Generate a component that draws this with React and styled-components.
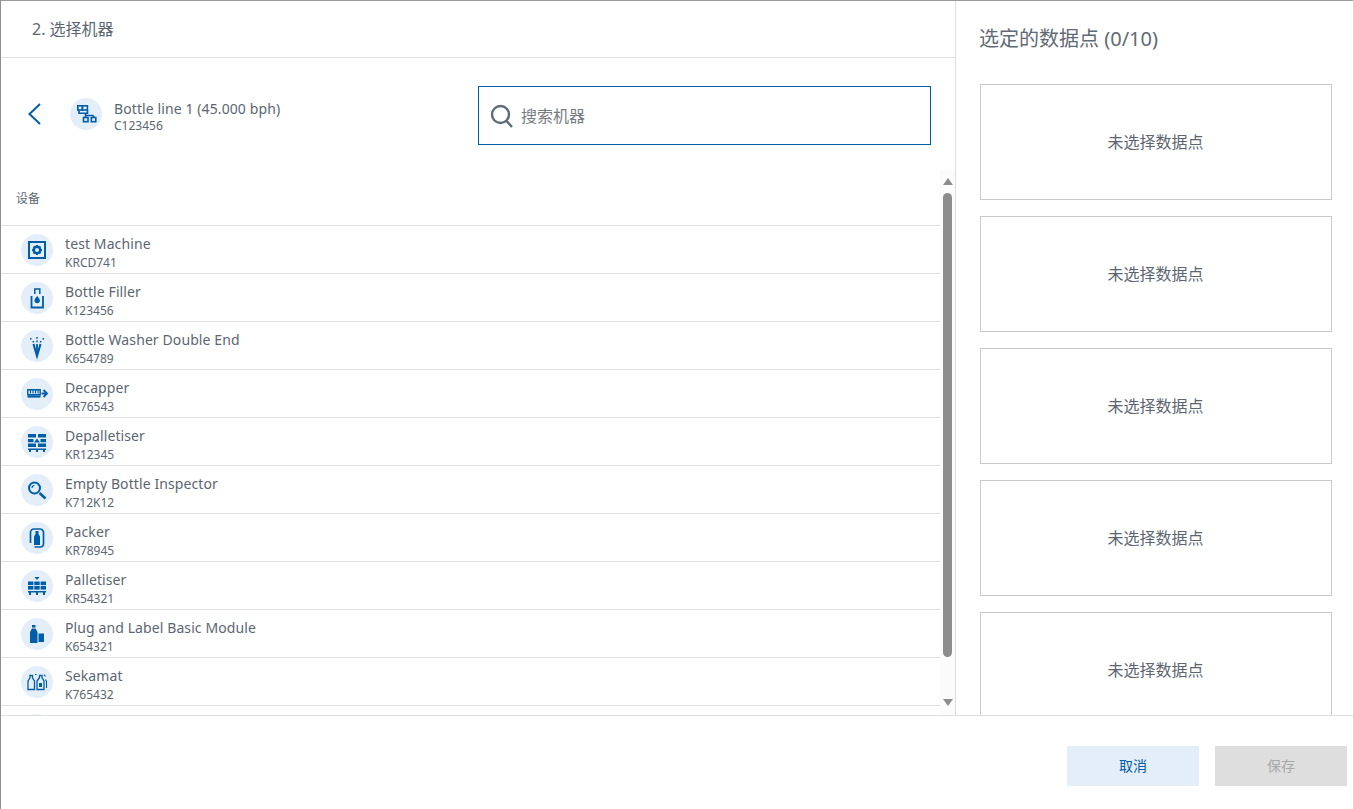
import * as React from "react";
import styled, { createGlobalStyle } from "styled-components";

const BLUE = "#005da8";
const FONT = `"Noto Sans", "Noto Sans CJK SC", sans-serif`;

const GlobalStyle = createGlobalStyle`
  html, body {
    margin: 0;
    padding: 0;
    background: #fff;
    overflow: hidden;
  }
  * {
    box-sizing: border-box;
  }
`;

const Page = styled.div`
  display: flex;
  flex-direction: column;
  height: 809px;
  border-top: 1px solid #9c9c9c;
  border-left: 1px solid #8f8f8f;
  font-family: ${FONT};
  color: #5c6671;
`;

const Main = styled.div`
  display: flex;
  height: 714px;
  overflow: hidden;
`;

const LeftPanel = styled.div`
  display: flex;
  flex-direction: column;
  width: 955px;
  border-right: 1px solid #dedede;
`;

const StepHeader = styled.div`
  display: flex;
  align-items: center;
  height: 57px;
  padding: 0 0 3px 31px;
  border-bottom: 1px solid #dedede;
  font-size: 16px;
`;

const Toolbar = styled.div`
  display: flex;
  align-items: flex-start;
  height: 112px;
`;

const BackButton = styled.div`
  display: flex;
  width: 69px;
  height: 24px;
  margin-top: 44px;
  padding-left: 26px;
`;

const LineInfo = styled.div`
  display: flex;
  align-items: center;
  gap: 12px;
  width: 408px;
  margin-top: 36px;
`;

const TextBlock = styled.div`
  display: flex;
  flex-direction: column;
  padding-top: 6px;
`;

const Name = styled.div`
  font-size: 14px;
  line-height: 18px;
  letter-spacing: 0.1px;
  white-space: nowrap;
`;

const Code = styled.div`
  font-size: 12px;
  line-height: 16px;
  white-space: nowrap;
`;

const SearchBox = styled.div`
  display: flex;
  align-items: center;
  gap: 7px;
  width: 453px;
  height: 59px;
  margin-top: 28px;
  padding-left: 11px;
  border: 1px solid ${BLUE};
`;

const Placeholder = styled.span`
  margin-bottom: 2px;
  font-size: 16px;
  color: #777c82;
`;

const ListArea = styled.div`
  display: flex;
  flex: 1;
  min-height: 0;
`;

const ListColumn = styled.div`
  flex: 1;
  min-width: 0;
  overflow: hidden;
`;

const ListTitle = styled.div`
  display: flex;
  align-items: center;
  height: 56px;
  padding: 1px 0 0 15px;
  border-bottom: 1px solid #dedede;
  font-size: 12px;
`;

const Row = styled.div`
  display: flex;
  align-items: center;
  gap: 12px;
  height: 48px;
  padding: 0 0 0 20px;
  border-bottom: 1px solid #dedede;
`;

const IconCircle = styled.div`
  flex: none;
  width: 32px;
  height: 32px;
  border-radius: 50%;
  background: #e3eef8;
  color: ${BLUE};
`;

const RowText = styled.div`
  display: flex;
  flex-direction: column;
  padding-top: 7px;
`;

const RowCode = styled(Code)`
  margin-top: 2px;
`;

const ScrollBar = styled.div`
  display: flex;
  flex: none;
  flex-direction: column;
  align-items: center;
  width: 15px;
  background: #fbfbfb;
`;

const ScrollThumb = styled.div`
  flex: none;
  width: 9px;
  height: 464px;
  border-radius: 5px;
  background: #8c8c8c;
`;

const ArrowUp = styled.div`
  flex: none;
  width: 0;
  height: 0;
  margin: 8px 0 8px;
  border-left: 5px solid transparent;
  border-right: 5px solid transparent;
  border-bottom: 7px solid #8c8c8c;
`;

const ArrowDown = styled(ArrowUp)`
  margin: 42px 0 0;
  border-bottom: 0;
  border-top: 7px solid #8c8c8c;
`;

const RightPanel = styled.div`
  display: flex;
  flex-direction: column;
  flex: 1;
  padding-left: 24px;
  overflow: hidden;
`;

const PanelTitle = styled.div`
  flex: none;
  height: 83px;
  margin-left: -1px;
  padding-top: 24px;
  font-size: 20px;
  line-height: 28px;
  color: #5f6a75;
`;

const SlotList = styled.div`
  display: flex;
  flex-direction: column;
  flex: none;
  gap: 16px;
  width: 352px;
`;

const Slot = styled.div`
  display: flex;
  flex: none;
  align-items: center;
  justify-content: center;
  height: 116px;
  padding: 0 1px 2px 0;
  border: 1px solid #c8c8c8;
  font-size: 16px;
`;

const Footer = styled.div`
  display: flex;
  justify-content: flex-end;
  gap: 16px;
  height: 94px;
  padding: 30px 6px 0 0;
  border-top: 1px solid #dedede;
`;

const Button = styled.button`
  width: 132px;
  height: 40px;
  padding: 0 0 2px;
  border: 0;
  font-family: ${FONT};
  font-size: 14px;
  color: ${props => (props.disabled ? "#a8a8a8" : BLUE)};
  background: ${props => (props.disabled ? "#dedede" : "#e3eef8")};
`;

const Svg = ({ children }) => (
  <svg width="32" height="32" viewBox="0 0 32 32" fill="none" stroke="currentColor" strokeWidth="1.5">
    {children}
  </svg>
);

const LineIcon = () => (
  <Svg>
    <rect x="7.8" y="7.8" width="4.6" height="4.2" strokeWidth="1.6" />
    <rect x="12.4" y="7.8" width="5" height="4.2" strokeWidth="1.6" />
    <path d="M9 12v3.2h8.500V12M15.500 15v2.500M15.500 17.500h8M15.500 17.500v2M23.500 17.500v2" strokeWidth="1.6" />
    <rect x="13.500" y="19.500" width="4.500" height="4.200" strokeWidth="1.600" />
    <rect x="21.300" y="19.500" width="4.500" height="4.200" strokeWidth="1.600" />
  </Svg>
);

const MachineIcon = () => (
  <Svg>
    <rect x="8" y="8" width="16" height="16" strokeWidth="2" />
    <circle cx="16" cy="16" r="3.2" strokeWidth="2.4" />
    <path d="M16 11v2M16 19v2M11 16h2M19 16h2M12.500 12.500l1.400 1.400M18.100 18.100l1.400 1.400M12.500 19.500l1.400-1.400M18.100 13.900l1.400-1.400" strokeWidth="2" />
  </Svg>
);

const FillerIcon = () => (
  <Svg>
    <path d="M10.500 14v11.500h11.500V14" strokeWidth="1.800" />
    <path d="M13.800 12V7h5v5" strokeWidth="1.500" />
    <path d="M16.200 14c-1.600 2-2.700 3.200-2.700 4.600a2.700 2.700 0 0 0 5.400 0c0-1.400-1.100-2.600-2.700-4.600z" fill="currentColor" stroke="none" />
  </Svg>
);

const WasherIcon = () => (
  <Svg>
    <path d="M12.500 14l3.500 12 3.500-12" strokeWidth="2.100" />
    <path d="M16 14v8" strokeWidth="1.800" />
    <path d="M16 7v1.800M16 10.500v1.800M9.500 8l.6 1.500M22.500 8l-.6 1.500M12 11l.6 1.500M20 11l-.6 1.500" strokeWidth="1.500" />
  </Svg>
);

const DecapperIcon = () => (
  <Svg>
    <path d="M6.800 11.800h12.400v5H6.800z" strokeWidth="1.400" />
    <path d="M9.500 12v3.500M12 12v3.500M14.500 12v3.500M17 12v3.500" strokeWidth="1.200" />
    <path d="M6.500 18.500h13" strokeWidth="2.200" />
    <path d="M20.500 15.500h5M22.500 12l3.500 3.500-3.500 3.500" strokeWidth="1.800" />
  </Svg>
);

const DepalletiserIcon = () => (
  <Svg>
    <g fill="currentColor" stroke="none">
      <rect x="7" y="8" width="8" height="3.500" />
      <rect x="17" y="8" width="8" height="3.500" />
      <rect x="7" y="13" width="5.500" height="3.200" />
      <rect x="19.500" y="13" width="5.500" height="3.200" />
      <path d="M16 12.500l3 4h-6z" />
      <rect x="7" y="17.500" width="8" height="3.500" />
      <rect x="17" y="17.500" width="8" height="3.500" />
      <rect x="7" y="22.500" width="18" height="1.500" />
      <rect x="8" y="23" width="2" height="3" />
      <rect x="15" y="23" width="2" height="3" />
      <rect x="22" y="23" width="2" height="3" />
    </g>
  </Svg>
);

const InspectorIcon = () => (
  <Svg>
    <circle cx="13.500" cy="14" r="5.500" strokeWidth="2" />
    <path d="M11 14a2.500 2.500 0 0 1 2.500-2.500" strokeWidth="1.200" />
    <path d="M18.500 19l6 5.500" strokeWidth="2.600" />
  </Svg>
);

const PackerIcon = () => (
  <Svg>
    <path d="M9.500 21V10.500a3.500 3.500 0 0 1 3.500-3.500h6a3.500 3.500 0 0 1 3.500 3.500V22a3 3 0 0 1-3 3h-6" strokeWidth="1.700" />
    <path d="M14.500 9h3v3l1.500 2.500V23h-6v-8.500l1.500-2.500z" fill="currentColor" stroke="none" />
  </Svg>
);

const PalletiserIcon = () => (
  <Svg>
    <g fill="currentColor" stroke="none">
      <path d="M13.500 7h5L16 10z" />
      <rect x="7" y="11.500" width="5.400" height="3.600" />
      <rect x="13.300" y="11.500" width="5.400" height="3.600" />
      <rect x="19.600" y="11.500" width="5.400" height="3.600" />
      <rect x="7" y="16" width="5.400" height="3.600" />
      <rect x="13.300" y="16" width="5.400" height="3.600" />
      <rect x="19.600" y="16" width="5.400" height="3.600" />
      <rect x="7" y="21" width="18" height="1.500" />
      <rect x="8" y="22" width="2" height="3" />
      <rect x="15" y="22" width="2" height="3" />
      <rect x="22" y="22" width="2" height="3" />
    </g>
  </Svg>
);

const PlugLabelIcon = () => (
  <Svg>
    <g fill="currentColor" stroke="none">
      <rect x="11" y="7" width="3.500" height="2.500" />
      <path d="M11 10.500h3.500l2 3.500v11h-7.500V14z" />
      <rect x="17.500" y="15.500" width="5.500" height="8.500" />
    </g>
  </Svg>
);

const SekamatIcon = () => (
  <Svg>
    <path d="M9 12l-2 3v8.500h6.500V15l-2-3V9.500H9z" strokeWidth="1.300" />
    <path d="M18.500 11.500L16 15v8.500h7V15l-2-3.500V9.500h-2.500z" strokeWidth="1.300" />
    <rect x="18" y="17" width="3" height="4" fill="currentColor" stroke="none" />
    <path d="M24.500 13.500l1 2V22M14 8.500h1.500M23 8.500l1.500 2" strokeWidth="1.100" />
  </Svg>
);

const BackIcon = () => (
  <svg width="15" height="24" viewBox="0 0 15 24" fill="none" stroke={BLUE} strokeWidth="2">
    <path d="M13 2L2.500 12 13 22" />
  </svg>
);

const SearchIcon = () => (
  <svg width="24" height="26" viewBox="0 0 24 26" fill="none" stroke="#5c6b7a">
    <circle cx="10.500" cy="11.500" r="8.500" strokeWidth="2.400" />
    <path d="M16.500 18l5.500 6" strokeWidth="2.400" />
  </svg>
);

const machines = [
  { name: "test Machine", code: "KRCD741", Icon: MachineIcon },
  { name: "Bottle Filler", code: "K123456", Icon: FillerIcon },
  { name: "Bottle Washer Double End", code: "K654789", Icon: WasherIcon },
  { name: "Decapper", code: "KR76543", Icon: DecapperIcon },
  { name: "Depalletiser", code: "KR12345", Icon: DepalletiserIcon },
  { name: "Empty Bottle Inspector", code: "K712K12", Icon: InspectorIcon },
  { name: "Packer", code: "KR78945", Icon: PackerIcon },
  { name: "Palletiser", code: "KR54321", Icon: PalletiserIcon },
  { name: "Plug and Label Basic Module", code: "K654321", Icon: PlugLabelIcon },
  { name: "Sekamat", code: "K765432", Icon: SekamatIcon }
];

const App = () => {
  return (
    <Page>
      <GlobalStyle />
      <Main>
        <LeftPanel>
          <StepHeader>2. 选择机器</StepHeader>
          <Toolbar>
            <BackButton>
              <BackIcon />
            </BackButton>
            <LineInfo>
              <IconCircle>
                <LineIcon />
              </IconCircle>
              <TextBlock>
                <Name>Bottle line 1 (45.000 bph)</Name>
                <Code>C123456</Code>
              </TextBlock>
            </LineInfo>
            <SearchBox>
              <SearchIcon />
              <Placeholder>搜索机器</Placeholder>
            </SearchBox>
          </Toolbar>
          <ListArea>
            <ListColumn>
              <ListTitle>设备</ListTitle>
              {machines.map(({ name, code, Icon }) => (
                <Row key={code}>
                  <IconCircle>
                    <Icon />
                  </IconCircle>
                  <RowText>
                    <Name>{name}</Name>
                    <RowCode>{code}</RowCode>
                  </RowText>
                </Row>
              ))}
              <Row>
                <IconCircle />
              </Row>
            </ListColumn>
            <ScrollBar>
              <ArrowUp />
              <ScrollThumb />
              <ArrowDown />
            </ScrollBar>
          </ListArea>
        </LeftPanel>
        <RightPanel>
          <PanelTitle>选定的数据点 (0/10)</PanelTitle>
          <SlotList>
            {[1, 2, 3, 4, 5].map(slot => (
              <Slot key={slot}>未选择数据点</Slot>
            ))}
          </SlotList>
        </RightPanel>
      </Main>
      <Footer>
        <Button>取消</Button>
        <Button disabled>保存</Button>
      </Footer>
    </Page>
  );
};

export default App;
